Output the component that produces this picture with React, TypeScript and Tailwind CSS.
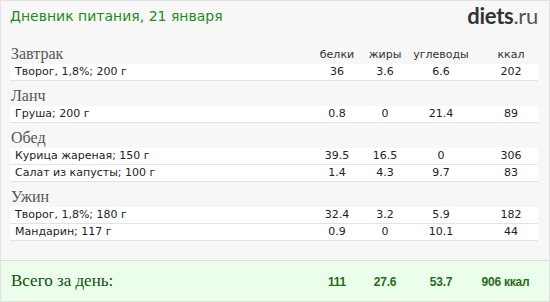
const sections = [
  { name: "Завтрак", items: [["Творог, 1,8%; 200 г", "36", "3.6", "6.6", "202"]] },
  { name: "Ланч", items: [["Груша; 200 г", "0.8", "0", "21.4", "89"]] },
  {
    name: "Обед",
    items: [
      ["Курица жареная; 150 г", "39.5", "16.5", "0", "306"],
      ["Салат из капусты; 100 г", "1.4", "4.3", "9.7", "83"],
    ],
  },
  {
    name: "Ужин",
    items: [
      ["Творог, 1,8%; 180 г", "32.4", "3.2", "5.9", "182"],
      ["Мандарин; 117 г", "0.9", "0", "10.1", "44"],
    ],
  },
];

const sans = "font-['DejaVu_Sans',Verdana,sans-serif]";
const serif = "font-['Liberation_Serif',serif]";

function Cols({ values, className }: { values: string[]; className?: string }) {
  return (
    <>
      <div className={`w-[48px] text-center ${className ?? ""}`}>{values[0]}</div>
      <div className={`w-[48px] text-center ${className ?? ""}`}>{values[1]}</div>
      <div className={`w-[64px] text-center ${className ?? ""}`}>{values[2]}</div>
      <div className={`w-[65px] pl-[11px] text-center ${className ?? ""}`}>{values[3]}</div>
    </>
  );
}

export default function App() {
  return (
    <div className="w-[550px] h-[302px] flex flex-col border border-[#e2e2e2] bg-[#f7f7f7] overflow-hidden">
      <div className="h-[38px] flex justify-between items-start pl-[9px] pr-[11px]">
        <div className={`${sans} text-[14px] leading-[17px] pt-[7px] text-[#1f8a1f]`}>Дневник питания, 21 января</div>
        <div className="font-['Lato',sans-serif] text-[22px] leading-[26px] mt-[2px] text-[#333] tracking-[-0.3px]">
          <span className="font-bold">diets</span>
          <span className="text-[#555]">.ru</span>
        </div>
      </div>

      <div className="pl-[9px] pr-[11px]">
        {sections.map((s, i) => (
          <div key={s.name}>
            <div className="h-[25px] flex items-end">
              <div className={`flex-1 ${serif} text-[16px] leading-[20px] text-[#555] pl-[1px]`}>{s.name}</div>
              {i === 0 && (
                <div className={`flex ${sans} text-[11px] leading-[16px] text-[#333] pb-[1px]`}>
                  <Cols values={["белки", "жиры", "углеводы", "ккал"]} />
                </div>
              )}
            </div>
            {s.items.map((it) => (
              <div
                key={it[0]}
                className={`h-[17px] flex bg-white border-b border-[#e3e3e3] ${sans} text-[11px] leading-[16px] text-[#222]`}
              >
                <div className="flex-1 pl-[5px]">{it[0]}</div>
                <Cols values={it.slice(1)} />
              </div>
            ))}
          </div>
        ))}
      </div>

      <div className="flex-1" />

      <div className="h-[41px] flex items-center border-t border-[#dcdcdc] bg-[#ebfdeb] pl-[10px] pr-[11px]">
        <div className={`flex-1 ${serif} text-[17px] leading-[20px] text-[#0e4f0e]`}>Всего за день:</div>
        <div className="flex font-['Liberation_Sans',Arial,sans-serif] font-bold text-[12px] text-[#2b6a20] pt-[2px] tracking-[-0.2px]">
          <Cols values={["111", "27.6", "53.7", "906 ккал"]} className="!pl-0 first:pl-0" />
        </div>
      </div>
    </div>
  );
}
